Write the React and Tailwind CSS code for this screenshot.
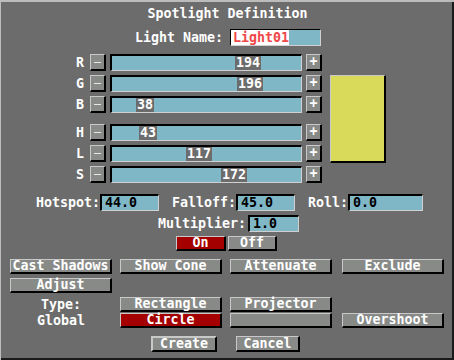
import React from "react";

const FONT = "font-['DejaVu_Sans_Mono',monospace] font-bold text-[13.3px] leading-none whitespace-nowrap";

const SmallBtn = ({ children, className = "" }) => (
  <div
    className={`shrink-0 w-[16px] h-[17px] flex items-center justify-center bg-[#878a87] border-t border-l border-t-[#c8c8c8] border-l-[#c8c8c8] border-r-2 border-b-2 border-r-black border-b-black ${className}`}
  >
    {children}
  </div>
);

const Btn = ({ children, className = "", red = false }) => (
  <div
    className={`shrink-0 h-[15px] flex items-center justify-center border-t border-l border-t-[#c8c8c8] border-l-[#c8c8c8] border-r-2 border-b-2 border-r-black border-b-black ${
      red ? "bg-[#a40000]" : "bg-[#878a87]"
    } ${className}`}
  >
    {children}
  </div>
);

const Field = ({ children, className = "" }) => (
  <div
    className={`shrink-0 h-[17px] flex items-center pl-[3px] bg-[#7fb7c7] text-black border-t-2 border-l-2 border-t-black border-l-black border-b border-r border-b-[#d0d0d0] border-r-[#d0d0d0] ${className}`}
  >
    {children}
  </div>
);

const Label = ({ children, className = "" }) => (
  <span className={`shrink-0 overflow-visible ${className}`}>{children}</span>
);

const Slider = ({ label, value }) => (
  <div className="flex items-center h-[17px]">
    <Label className="ml-[76px] w-[14px]">{label}</Label>
    <SmallBtn>
      <div className="w-[7px] h-[1px] bg-[#e8e8e8]" />
    </SmallBtn>
    <div className="shrink-0 ml-[4px] w-[192px] h-[17px] relative bg-[#7fb7c7] border-t-2 border-l-2 border-t-black border-l-black border-b border-r border-b-[#d0d0d0] border-r-[#d0d0d0]">
      <div
        className="absolute top-0 bottom-0 px-[1px] bg-[#6c6c6c] flex items-center"
        style={{ left: Math.round((value * 162) / 255) }}
      >
        {value}
      </div>
    </div>
    <SmallBtn className="ml-[4px]">+</SmallBtn>
  </div>
);

export default function App() {
  return (
    <div
      className={`w-[454px] h-[360px] bg-[#6c6c6c] shadow-[inset_1px_2px_0_#bcbcbc,inset_-2px_-2px_0_#1a1a1a] flex flex-col text-white ${FONT}`}
    >
      <div className="mt-[4px] h-[20px] flex items-center justify-center pl-[1px]">
        Spotlight Definition
      </div>

      <div className="mt-[5px] h-[17px] flex items-center">
        <Label className="ml-[135px] w-[88px]">Light Name:</Label>
        <div className="shrink-0 ml-[7px] w-[91px] h-[17px] flex bg-[#7fb7c7] border-t border-l border-t-black border-l-black border-b border-r border-b-[#d0d0d0] border-r-[#d0d0d0]">
          <div className="w-[58px] bg-white text-[#f04848] flex items-center pl-[2px]">
            Light01
          </div>
        </div>
      </div>

      <div className="mt-[8px] flex">
        <div className="flex flex-col">
          <div className="flex flex-col gap-[4px]">
            <Slider label="R" value={194} />
            <Slider label="G" value={196} />
            <Slider label="B" value={38} />
          </div>
          <div className="mt-[11px] flex flex-col gap-[4px]">
            <Slider label="H" value={43} />
            <Slider label="L" value={117} />
            <Slider label="S" value={172} />
          </div>
        </div>
        <div className="shrink-0 ml-[8px] mt-[21px] w-[56px] h-[88px] bg-[#d9d95a] border-t border-l border-t-[#c8c8c8] border-l-[#c8c8c8] border-r-2 border-b-2 border-r-black border-b-black" />
      </div>

      <div className="mt-[11px] h-[17px] flex items-center">
        <Label className="ml-[36px] w-[64px]">Hotspot:</Label>
        <Field className="w-[59px]">44.0</Field>
        <Label className="ml-[13px] w-[64px]">Falloff:</Label>
        <Field className="w-[59px]">45.0</Field>
        <Label className="ml-[13px] w-[40px]">Roll:</Label>
        <Field className="w-[75px]">0.0</Field>
      </div>

      <div className="mt-[4px] h-[17px] flex items-center">
        <Label className="ml-[158px] w-[88px]">Multiplier:</Label>
        <Field className="ml-[2px] w-[51px]">1.0</Field>
      </div>

      <div className="mt-[4px] flex">
        <Btn red className="ml-[176px] w-[50px]">On</Btn>
        <Btn className="ml-[2px] w-[49px]">Off</Btn>
      </div>

      <div className="mt-[8px] flex">
        <Btn className="ml-[10px] w-[102px]">Cast Shadows</Btn>
        <Btn className="ml-[8px] w-[102px]">Show Cone</Btn>
        <Btn className="ml-[8px] w-[102px]">Attenuate</Btn>
        <Btn className="ml-[10px] w-[102px]">Exclude</Btn>
      </div>

      <div className="mt-[4px] flex">
        <Btn className="ml-[10px] w-[102px]">Adjust</Btn>
      </div>

      <div className="mt-[4px] flex items-center">
        <Label className="ml-[10px] w-[102px] text-center">Type:</Label>
        <Btn className="ml-[8px] w-[102px]">Rectangle</Btn>
        <Btn className="ml-[8px] w-[102px]">Projector</Btn>
      </div>

      <div className="mt-[1px] flex items-center">
        <Label className="ml-[10px] w-[102px] text-center">Global</Label>
        <Btn red className="ml-[8px] w-[102px]">Circle</Btn>
        <Btn className="ml-[8px] w-[102px]"></Btn>
        <Btn className="ml-[10px] w-[102px]">Overshoot</Btn>
      </div>

      <div className="mt-[8px] flex">
        <Btn className="ml-[151px] w-[66px] h-[16px] border-t-2 border-l-2">Create</Btn>
        <Btn className="ml-[19px] w-[64px] h-[16px]">Cancel</Btn>
      </div>
    </div>
  );
}
